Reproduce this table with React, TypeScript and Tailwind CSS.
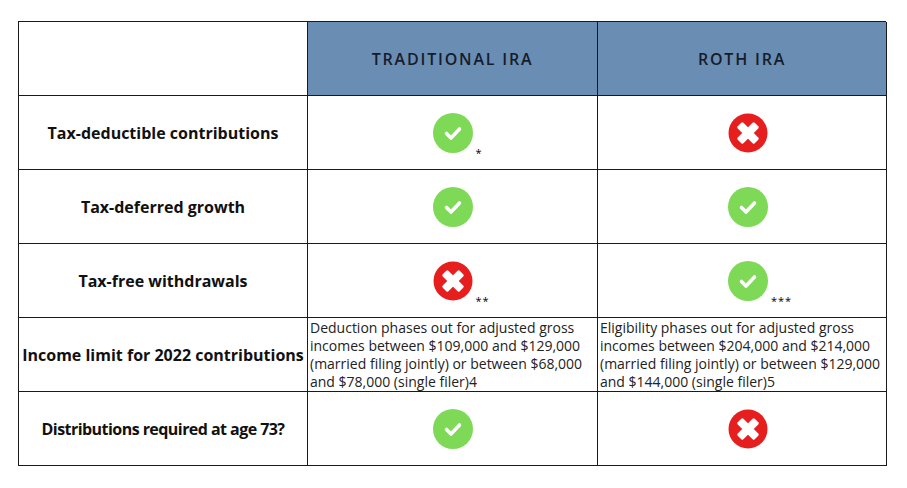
import type { ReactNode } from 'react'

function CheckIcon() {
  return (
    <svg width="40" height="40" viewBox="0 0 40 40">
      <circle cx="20" cy="20" r="20" fill="#7ed957" />
      <polyline
        points="13.5,20.5 18,25 26.5,16"
        fill="none"
        stroke="#ffffff"
        strokeWidth="3.6"
        strokeLinecap="round"
        strokeLinejoin="round"
      />
    </svg>
  )
}

function CrossIcon() {
  return (
    <svg width="40" height="40" viewBox="0 0 40 40">
      <circle cx="20" cy="20" r="19.5" fill="#e61e1e" />
      <rect x="8" y="16" width="24" height="8" rx="1.5" fill="#ffffff" transform="rotate(45 20 20)" />
      <rect x="8" y="16" width="24" height="8" rx="1.5" fill="#ffffff" transform="rotate(-45 20 20)" />
    </svg>
  )
}

function Mark({ ok, note }: { ok: boolean; note?: string }) {
  return (
    <div className="relative">
      {ok ? <CheckIcon /> : <CrossIcon />}
      {note ? (
        <span className="absolute left-[43px] top-[34px] text-[11px] leading-none tracking-[1px] text-black">
          {note}
        </span>
      ) : null}
    </div>
  )
}

function Cell({ children, className = '' }: { children?: ReactNode; className?: string }) {
  return <div className={`flex h-[74px] items-center border-r border-b border-[#1a1a1a] ${className}`}>{children}</div>
}

const rows: { label: string; labelClass?: string; trad: ReactNode; roth: ReactNode }[] = [
  {
    label: 'Tax-deductible contributions',
    trad: <Mark ok note="*" />,
    roth: <Mark ok={false} />,
  },
  {
    label: 'Tax-deferred growth',
    trad: <Mark ok />,
    roth: <Mark ok />,
  },
  {
    label: 'Tax-free withdrawals',
    trad: <Mark ok={false} note="**" />,
    roth: <Mark ok note="***" />,
  },
  {
    label: 'Income limit for 2022 contributions',
    trad: (
      <p className="pl-[2px] text-[14px] leading-[18px] text-[#222]">
        Deduction phases out for adjusted gross incomes between $109,000 and $129,000 (married filing jointly) or
        between $68,000 and $78,000 (single filer)4
      </p>
    ),
    roth: (
      <p className="pl-[2px] text-[14px] leading-[18px] text-[#222]">
        Eligibility phases out for adjusted gross incomes between $204,000 and $214,000 (married filing jointly) or
        between $129,000 and $144,000 (single filer)5
      </p>
    ),
  },
  {
    label: 'Distributions required at age 73?',
    labelClass: 'tracking-[-0.55px]',
    trad: <Mark ok />,
    roth: <Mark ok={false} />,
  },
]

export default function App() {
  return (
    <div className="h-[488px] w-[907px] bg-white pt-[21px] pl-[18px] font-['Open_Sans',sans-serif]">
      <div className="grid w-[868px] grid-cols-[289px_290px_289px] border-t border-l border-[#1a1a1a]">
        <Cell />
        <Cell className="justify-center bg-[#6a8db4]">
          <span className="text-[16px] font-semibold tracking-[1.8px] text-[#161c2a]">TRADITIONAL IRA</span>
        </Cell>
        <Cell className="justify-center bg-[#6a8db4]">
          <span className="text-[16px] font-semibold tracking-[1.8px] text-[#161c2a]">ROTH IRA</span>
        </Cell>

        {rows.map((row) => {
          const isText = row.label.startsWith('Income')
          return (
            <div key={row.label} className="contents">
              <Cell className="justify-center">
                <span className={`text-[16px] font-bold text-[#111] ${row.labelClass ?? ''}`}>{row.label}</span>
              </Cell>
              <Cell className={isText ? '' : 'justify-center'}>{row.trad}</Cell>
              <Cell className={isText ? '' : 'justify-center pl-[12px]'}>{row.roth}</Cell>
            </div>
          )
        })}
      </div>
    </div>
  )
}
